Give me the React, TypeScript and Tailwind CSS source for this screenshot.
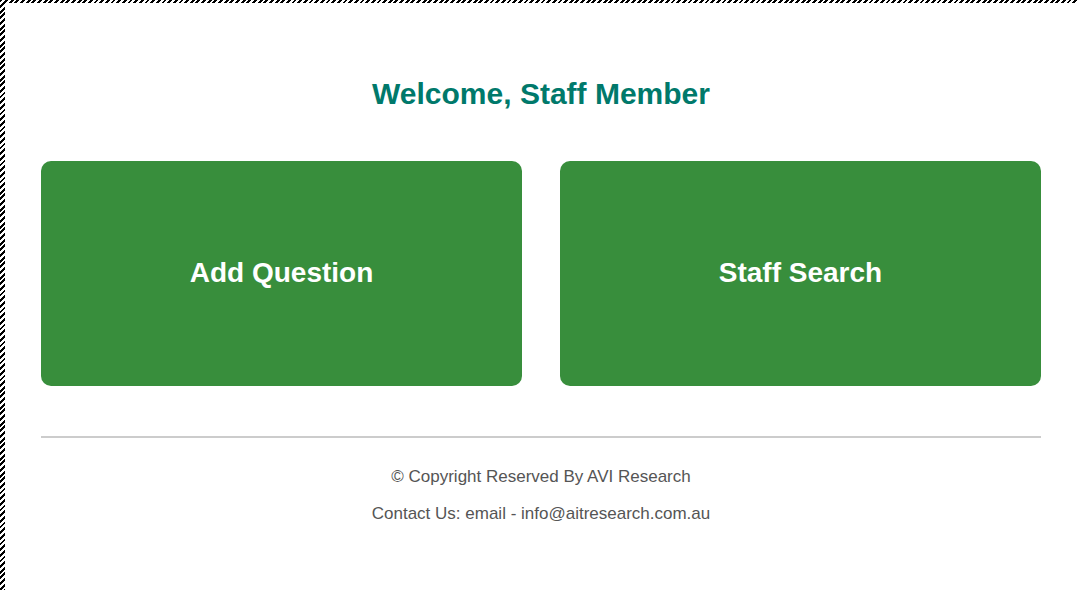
const tiles = ["Add Question", "Staff Search"];

export default function App() {
  return (
    <div
      className="relative h-[590px] w-full overflow-hidden bg-white"
      style={{ fontFamily: '"Liberation Sans", Arial, sans-serif' }}
    >
      {/* hatched selection edge */}
      <div className="pointer-events-none absolute left-0 top-0 h-[3px] w-full bg-[repeating-linear-gradient(135deg,#000_0px,#000_2px,#fff_2px,#fff_4px)]" />
      <div className="pointer-events-none absolute left-0 top-0 h-full w-[5px] bg-[repeating-linear-gradient(135deg,#000_0px,#000_2px,#fff_2px,#fff_4px)]" />

      <main className="pl-[41px] pr-[37px] pt-[77px]">
        <h1 className="text-center text-[30px] font-bold leading-[34px] text-[#00796b]">
          Welcome, Staff Member
        </h1>

        <div className="mt-[50px] grid grid-cols-2 gap-[38px]">
          {tiles.map((t) => (
            <button
              key={t}
              className="flex h-[225px] items-center justify-center rounded-[10px] bg-[#388e3c] pb-[2px] text-[28px] font-bold text-white"
            >
              {t}
            </button>
          ))}
        </div>

        <hr className="mt-[50px] border-0 border-t-2 border-[#cccccc]" />

        <footer className="mt-[29px] text-center text-[17px] leading-[20px] text-[#555555]">
          <p>© Copyright Reserved By AVI Research</p>
          <p className="mt-[17px]">Contact Us: email - info@aitresearch.com.au</p>
        </footer>
      </main>
    </div>
  );
}
